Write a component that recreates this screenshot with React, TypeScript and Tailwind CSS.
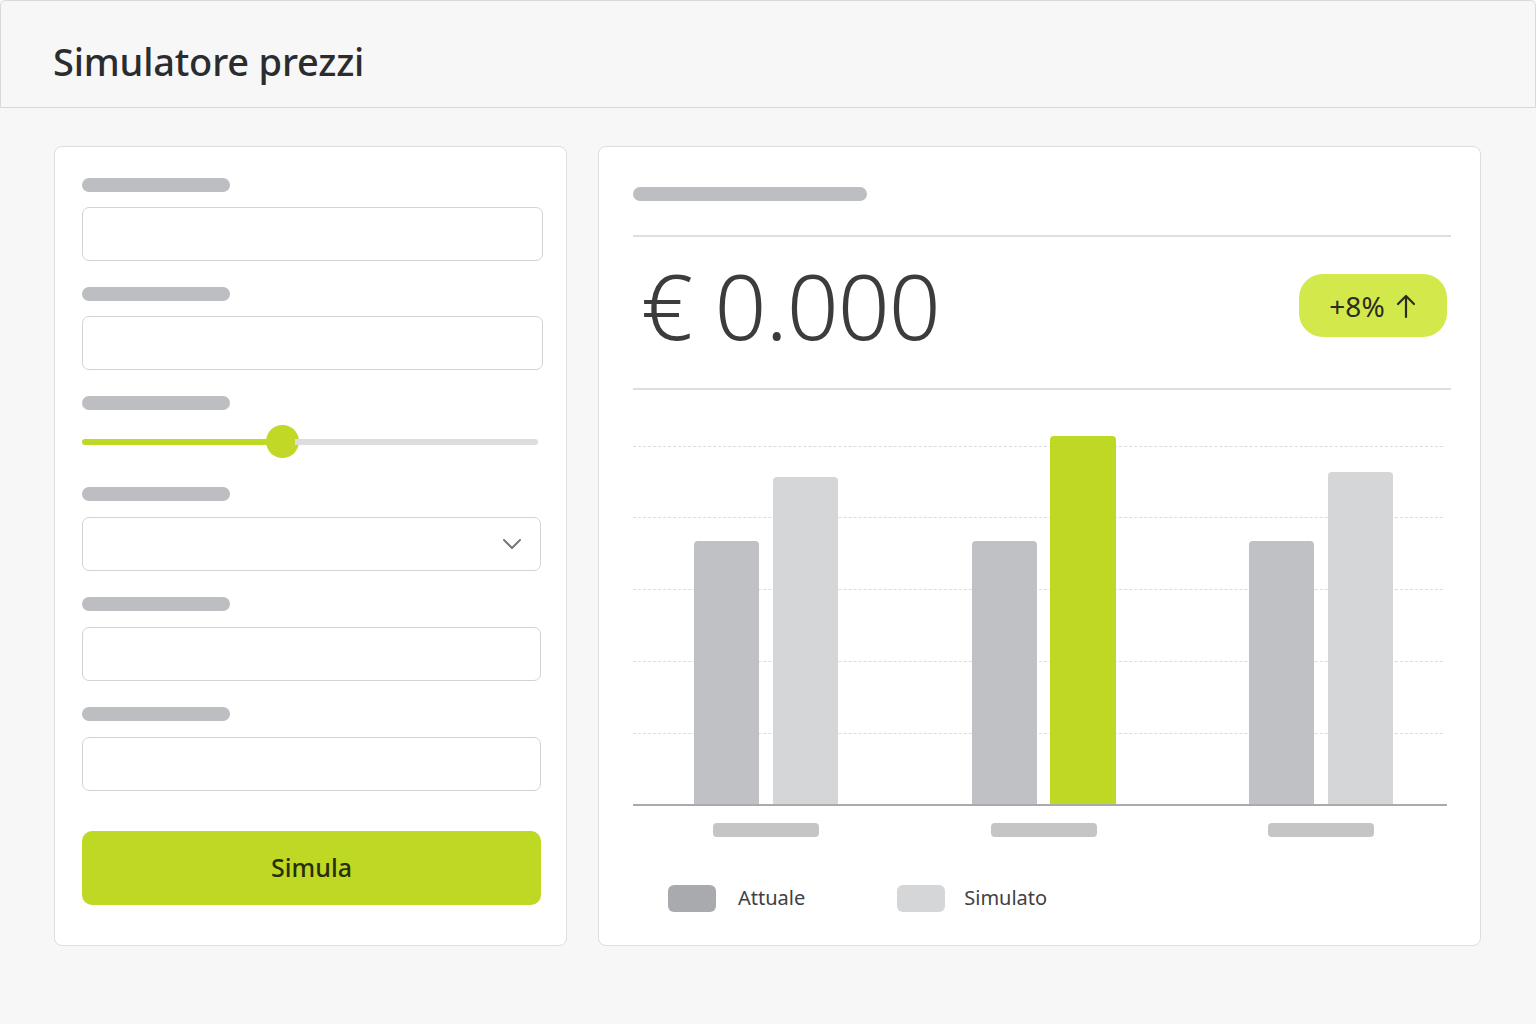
import React from "react";

const font = { fontFamily: '"Noto Sans", "Open Sans", sans-serif' };

function LabelBar({ w = "w-[148px]" }: { w?: string }) {
  return <div className={`h-[14px] ${w} shrink-0 rounded-full bg-[#bdbec1]`} />;
}

function Field({ children }: { children?: React.ReactNode }) {
  return (
    <div className="flex h-[54px] items-center justify-end rounded-[7px] border border-[#d3d3d5] bg-white pr-[18px]">
      {children}
    </div>
  );
}

const groups = [
  { current: 263, simulated: 327, highlight: false },
  { current: 263, simulated: 368, highlight: true },
  { current: 263, simulated: 332, highlight: false },
];

function FormCard() {
  return (
    <div className="flex h-[800px] w-[513px] shrink-0 flex-col rounded-[8px] border border-[#dedee0] bg-white pl-[27px] pr-[25px] pt-[31px]">
      <LabelBar />
      <div className="mt-[15px] mr-[-2px]">
        <Field />
      </div>
      <div className="mt-[26px]">
        <LabelBar />
      </div>
      <div className="mt-[15px] mr-[-2px]">
        <Field />
      </div>
      <div className="mt-[26px]">
        <LabelBar />
      </div>
      <div className="mt-[15px] flex h-[33px] items-center pr-[3px]">
        <div className="h-[6px] w-[188px] rounded-l-full bg-[#bfd824]" />
        <div className="h-[33px] w-[33px] shrink-0 rounded-full bg-[#c2d827] ml-[-4px]" />
        <div className="h-[6px] flex-1 rounded-r-full bg-[#dddddf] ml-[-4px]" />
      </div>
      <div className="mt-[29px]">
        <LabelBar />
      </div>
      <div className="mt-[16px]">
        <Field>
          <svg width="20" height="14" viewBox="0 0 20 14" fill="none">
            <path d="M2 3l8 8 8-8" stroke="#77787b" strokeWidth="2" strokeLinecap="round" strokeLinejoin="round" />
          </svg>
        </Field>
      </div>
      <div className="mt-[26px]">
        <LabelBar />
      </div>
      <div className="mt-[16px]">
        <Field />
      </div>
      <div className="mt-[26px]">
        <LabelBar />
      </div>
      <div className="mt-[16px]">
        <Field />
      </div>
      <button
        type="button"
        className="mt-[40px] flex h-[74px] shrink-0 items-center justify-center rounded-[10px] bg-[#bfd824] text-[25px] font-medium text-[#263009]"
        style={font}
      >
        Simula
      </button>
    </div>
  );
}

function ChartCard() {
  return (
    <div className="flex h-[800px] w-[883px] shrink-0 flex-col rounded-[8px] border border-[#dedee0] bg-white pl-[34px] pr-[29px] pt-[40px]">
      <LabelBar w="w-[234px]" />
      <div className="mt-[34px] h-[2px] shrink-0 bg-[#dededf]" />
      <div className="flex h-[151px] shrink-0 items-center justify-between pb-[14px] pl-[8px] pr-[4px]">
        <span className="text-[91px] font-light leading-none tracking-[-1px] text-[#3b3c3e]" style={font}>
          € 0.000
        </span>
        <div
          className="flex h-[63px] w-[148px] items-center justify-center gap-[10px] rounded-[24px] bg-[#d3e84a] text-[28px] text-[#2a2d22]"
          style={font}
        >
          <span>+8%</span>
          <svg width="22" height="26" viewBox="0 0 22 26" fill="none">
            <path d="M11 24V3M3 11l8-8 8 8" stroke="#2a2d22" strokeWidth="2.2" strokeLinecap="round" strokeLinejoin="round" />
          </svg>
        </div>
      </div>
      <div className="h-[2px] shrink-0 bg-[#dededf]" />

      <div className="relative mt-[46px] mr-[4px] h-[370px] shrink-0 border-b-2 border-[#a9aaad]">
        {[10, 81, 153, 225, 297].map((top) => (
          <div
            key={top}
            className="absolute left-0 right-[4px] border-t border-dashed border-[#dcdcde]"
            style={{ top }}
          />
        ))}
        <div className="relative flex h-full items-end justify-between pl-[61px] pr-[54px]">
          {groups.map((g, i) => (
            <div key={i} className="flex w-[144px] items-end justify-between">
              <div className="w-[65px] rounded-t-[4px] bg-[#c0c1c4]" style={{ height: g.current }} />
              <div
                className={g.highlight ? "w-[66px] rounded-t-[4px] bg-[#bfd824]" : "w-[65px] rounded-t-[4px] bg-[#d5d6d8]"}
                style={{ height: g.simulated }}
              />
            </div>
          ))}
        </div>
      </div>

      <div className="mt-[17px] flex justify-between pl-[61px] pr-[58px]">
        {groups.map((_, i) => (
          <div key={i} className="flex w-[144px] justify-center">
            <div className="h-[14px] w-[106px] rounded-[4px] bg-[#c4c5c7]" />
          </div>
        ))}
      </div>

      <div className="mt-[46px] flex items-center pl-[35px]" style={font}>
        <div className="h-[27px] w-[48px] rounded-[6px] bg-[#a9aaad]" />
        <span className="ml-[22px] text-[20px] text-[#3f4043]">Attuale</span>
        <div className="ml-[92px] h-[27px] w-[48px] rounded-[6px] bg-[#d5d6d8]" />
        <span className="ml-[19px] text-[20px] text-[#3f4043]">Simulato</span>
      </div>
    </div>
  );
}

export default function App() {
  return (
    <div className="flex h-[1024px] w-[1536px] flex-col bg-[#f7f7f8]" style={font}>
      <header className="flex h-[108px] shrink-0 items-center rounded-t-[6px] border border-[#d9d9db] bg-[#f7f7f8] pl-[52px] pt-[14px]">
        <h1 className="text-[38px] font-medium tracking-[-0.2px] text-[#2b2c2e]">Simulatore prezzi</h1>
      </header>
      <main className="flex gap-[31px] pl-[54px] pt-[38px]">
        <FormCard />
        <ChartCard />
      </main>
    </div>
  );
}
